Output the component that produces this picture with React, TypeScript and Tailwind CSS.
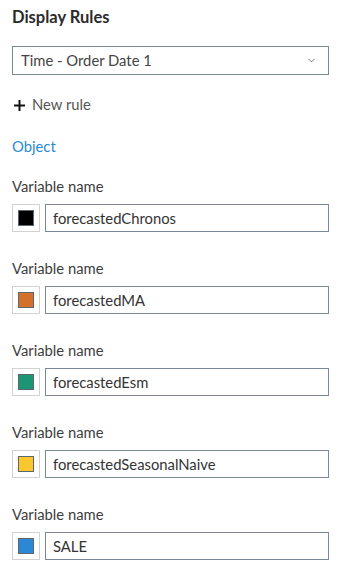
import { ChevronDown } from "lucide-react";

const rules = [
  { name: "forecastedChronos", color: "bg-[#000000]" },
  { name: "forecastedMA", color: "bg-[#d3702d]" },
  { name: "forecastedEsm", color: "bg-[#1b9674]" },
  { name: "forecastedSeasonalNaive", color: "bg-[#f9c82c]" },
  { name: "SALE", color: "bg-[#2c88d5]" },
];

function RuleRow({ name, color }: { name: string; color: string }) {
  return (
    <div className="flex flex-col">
      <label className="h-5 leading-5 text-[14.8px] text-[#3d3d3d]">Variable name</label>
      <div className="mt-2 flex h-7 gap-[5px]">
        <div className="flex w-7 items-center justify-center border border-[#d2d2d2] bg-white">
          <span className={`h-4 w-4 border border-[#5e6670] ${color}`} />
        </div>
        <input
          readOnly
          value={name}
          className="flex-1 border border-[#7a889a] px-[7px] text-[14.8px] text-[#333] outline-none"
        />
      </div>
    </div>
  );
}

export default function App() {
  return (
    <div className="h-[568px] w-[337px] bg-white pl-3 pr-2 font-['Lato',sans-serif]">
      <h1 className="pt-[7px] text-[16.5px] font-bold leading-5 text-[#2b2b2b]">Display Rules</h1>

      <div className="mt-[19px] flex h-[29px] items-center justify-between border border-[#7a889a] pl-2 pr-[11px]">
        <span className="text-[14.8px] text-[#444]">Time - Order Date 1</span>
        <ChevronDown size={11} strokeWidth={1.5} className="text-[#444]" />
      </div>

      <button className="mt-[19px] flex h-5 items-center gap-[7px] pl-[2px] text-[14.8px] text-[#555]">
        <svg width="11" height="11" viewBox="0 0 11 11" className="mt-[2px]">
          <rect x="0" y="4.5" width="11" height="2" fill="#111" />
          <rect x="4.5" y="0" width="2" height="11" fill="#111" />
        </svg>
        New rule
      </button>

      <div className="mt-[22px] h-5 leading-5 text-[14.8px] text-[#2a8ad6]">Object</div>

      <div className="mt-5 flex flex-col gap-[26px]">
        {rules.map((r) => (
          <RuleRow key={r.name} name={r.name} color={r.color} />
        ))}
      </div>
    </div>
  );
}
